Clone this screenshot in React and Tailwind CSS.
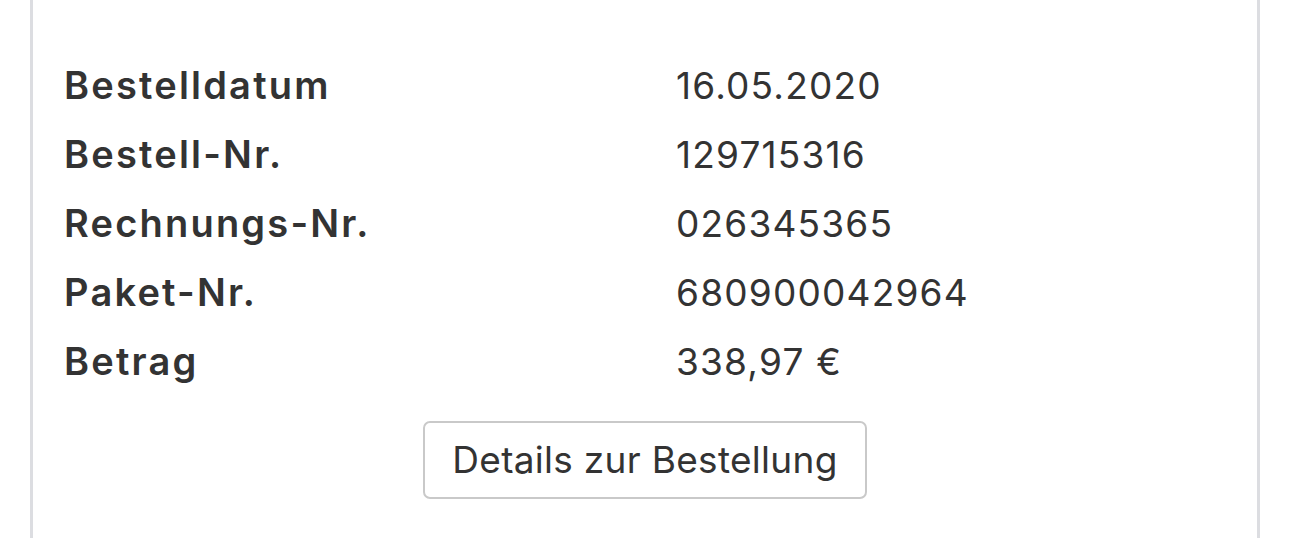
export default function App() {
  const rows = [
    ["Bestelldatum", "16.05.2020"],
    ["Bestell-Nr.", "129715316"],
    ["Rechnungs-Nr.", "026345365"],
    ["Paket-Nr.", "680900042964"],
    ["Betrag", "338,97 €"],
  ];
  return (
    <div className="w-[1290px] h-[538px] bg-white overflow-hidden" style={{ fontFamily: "Inter, 'Open Sans', sans-serif" }}>
      <div className="ml-[30px] w-[1230px] h-[600px] border-x-[3px] border-[#dcdde1] pt-[51px] pl-[31px] text-[#333333]">
        {rows.map(([k, v]) => (
          <div key={k} className="flex h-[69px] items-center leading-[69px]">
            <div className="w-[612px] text-[38px] font-semibold tracking-[2.2px]">{k}</div>
            <div className="text-[37px] font-normal tracking-[1.2px]">{v}</div>
          </div>
        ))}
        <div className="flex justify-center mt-[25px] pr-[31px]">
          <button className="w-[444px] h-[78px] border-2 border-[#c9c9c9] rounded-[7px] bg-white text-[37px] text-[#333333] tracking-[0.3px] flex items-center justify-center">
            Details zur Bestellung
          </button>
        </div>
      </div>
    </div>
  );
}
